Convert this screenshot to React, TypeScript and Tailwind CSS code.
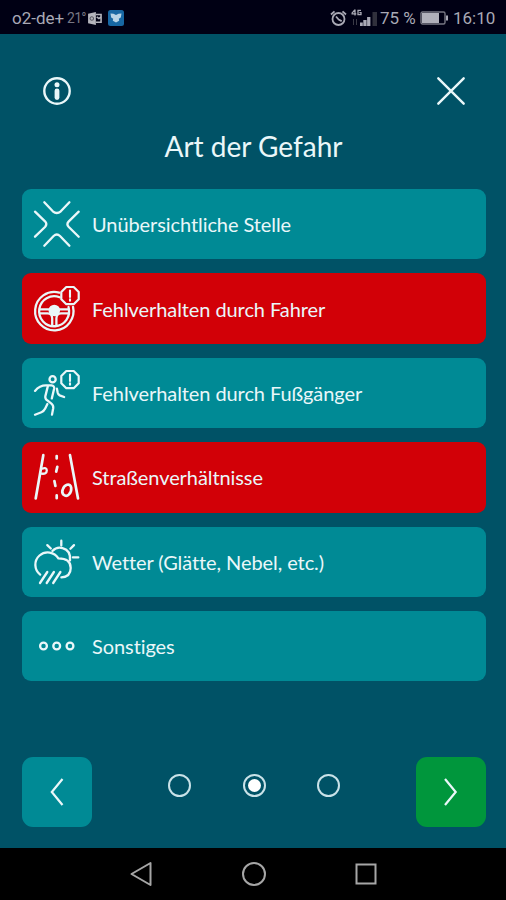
import type { ReactNode } from "react";
import clsx from "clsx";

interface Hazard {
  id: string;
  label: string;
  selected?: boolean;
  icon: ReactNode;
}

// Octagonal warning sign shared by the driver and pedestrian icons
function WarningSign() {
  return (
    <>
      <path d="M33.3 2h7.4l5 5v7.2l-5 5h-7.4l-5-5V7z" strokeWidth="2.2" />
      <path d="M37 5.6v6.4M37 14.2v1.6" strokeWidth="2.1" />
    </>
  );
}

const HAZARDS: Hazard[] = [
  {
    id: "blind-spot",
    label: "Unübersichtliche Stelle",
    icon: (
      <>
        <path d="M11.3 2.3 19.8 11.3Q23.8 14.6 27.8 11.3L36.4 2.3" />
        <path d="M11.3 45.7 20.6 36Q23.8 33 27 36L36.4 45.7" />
        <path d="M2 11.7 12 21.3Q14.6 24.1 12 27L2 36.7" />
        <path d="M45.7 11.7 35.8 21.3Q33 24.1 35.8 27L45.7 36.7" />
      </>
    ),
  },
  {
    id: "driver",
    label: "Fehlverhalten durch Fahrer",
    selected: true,
    icon: (
      <>
        <path d="M26.2 7.6A19.2 19.2 0 1 0 40 21.8" />
        <path d="M26.6 12.3A15 15 0 1 0 35.5 22" />
        <path d="M6.9 24.4h28.8M7.2 28.4h7.4q4.6.4 4.6 5v7M35.4 28.4H28q-4.6.4-4.6 5v7" />
        <circle cx="21.3" cy="25.4" r="4.6" fill="currentColor" />
        <WarningSign />
      </>
    ),
  },
  {
    id: "pedestrian",
    label: "Fehlverhalten durch Fußgänger",
    icon: (
      <>
        <circle cx="19.6" cy="10.2" r="3.1" />
        <path d="M2 21.9Q6.6 16.4 13 16.4h5.4q3.2.2 2.7 3.4L18.8 29.4" />
        <path d="M14.8 17.4 12.3 27.4Q12 30 14.4 31.4L18.4 34.6Q20.6 36.4 20.2 39.2L19 45.6" />
        <path d="M14.4 35 12.2 39.6Q11 42.2 8.4 43.2L2 45.7" />
        <path d="m23.9 19.6.8 4.2q.4 1.8 2 2.6l4.4 1.6" />
        <WarningSign />
      </>
    ),
  },
  {
    id: "road",
    label: "Straßenverhältnisse",
    selected: true,
    icon: (
      <>
        <path d="M10.3 2.2 2.7 45.5M37 2.2l8 43.3" strokeWidth="2.7" />
        <path d="M23.7 3v2.4M24.3 13.8 23.2 18.6M21.4 28l1 5M23.7 42.4v2.8" strokeWidth="2.7" />
        <path d="M9 15.6q4.8-1.6 4.8 2 0 3.8-5.6 3" />
        <path d="M34 31.8q3.6-.8 4.2 3 .4 3.8-2.2 6.6-2.6 2.6-5.4.4-2.2-2.4-.8-5.6 1.4-3.6 4.2-4.4z" strokeWidth="2.7" />
      </>
    ),
  },
  {
    id: "weather",
    label: "Wetter (Glätte, Nebel, etc.)",
    icon: (
      <>
        <path d="M7.2 36.6A12.4 12.4 0 1 1 25.4 20.4Q37.7 20.4 37.7 30 37.7 38.8 28.4 39.4" />
        <path d="M19.4 13Q24 8.2 29.6 10.2 38 12.6 37 22.4" />
        <path d="M28.3 2.7v4.8M14.3 7.1l3.5 3.4M41 7.1l-3.6 3.6M39.9 19.4h5.4" />
        <path d="M14.3 34 7 45M20.9 34 13.7 45M27.4 34 20.2 45" />
      </>
    ),
  },
  {
    id: "other",
    label: "Sonstiges",
    icon: (
      <>
        <circle cx="10.5" cy="24" r="3.4" />
        <circle cx="23.7" cy="24" r="3.4" />
        <circle cx="37" cy="24" r="3.4" />
      </>
    ),
  },
];

const STEPS = 3;
const CURRENT_STEP = 1;

function StatusBar() {
  return (
    <div className="flex h-[34px] shrink-0 items-center justify-between bg-[#000014] pl-[12px] pr-[11px] pt-[2px] font-[Roboto,sans-serif] text-[#a9a9b5]">
      <div className="flex items-center">
        <span className="w-[55px] whitespace-nowrap text-[17px] leading-none">o2-de+</span>
        <span className="w-[20px] whitespace-nowrap text-[14px] leading-none tracking-[-0.7px] text-[#777783]">21°</span>
        <svg width="16" height="13" viewBox="0 0 16 15" fill="none">
          <path d="M0 2 9 0v15l-9-2z" fill="#b5b5bd" />
          <path d="M9 2.8h6v9H9M10 5.5l2.5 2 2.5-2" stroke="#b5b5bd" strokeWidth="1.8" />
          <circle cx="4.3" cy="7.5" r="2" stroke="#55555f" strokeWidth="1.2" />
        </svg>
        <svg className="ml-[5px]" width="16" height="16" viewBox="0 0 16 16">
          <rect width="16" height="16" rx="2.5" fill="#1767a3" />
          <path d="m2.5 3.5 3 .2L8 5l2.5-1.3 3-.2-.7 4-2 1.2.4 2.1L8 12.5l-3.2-1.7.4-2.1-2-1.2z" fill="#b7d3e6" />
        </svg>
      </div>
      <div className="flex items-center">
        <svg width="17" height="17" viewBox="0 0 17 17" fill="none" stroke="currentColor" strokeWidth="1.8">
          <circle cx="8.5" cy="9" r="6" />
          <path d="M1 4.5 4.5 1.3M16 4.5l-3.5-3.2M6 6.5l2.7 3 3 1.6" />
        </svg>
        <svg className="ml-[4px]" width="27" height="18" viewBox="0 0 27 18" fill="currentColor">
          <path d="M4 .5v6M.5 4.8h4.8M.6 4.6 3.8.8M10 1.4H7v4.2h3V3.6H8.4" fill="none" stroke="currentColor" strokeWidth="1.3" />
          <path d="M2.5 10v6M5.5 10v6" stroke="#3a3a46" />
          <path d="M9 13.5h2.8V17H9zM12.3 11h3.3v6h-3.3zM16.1 8h3.3v9h-3.3z" />
          <path d="M21.5 3H26v14h-4.5z" fill="#30303c" />
        </svg>
        <span className="ml-[2px] w-[40px] whitespace-nowrap text-[17px] leading-none">75 %</span>
        <svg width="28" height="14" viewBox="0 0 28 14" fill="none">
          <rect x="1" y="1" width="24" height="12" rx="1.5" stroke="#777783" strokeWidth="1.4" />
          <path d="M2 2h17v10H2z" fill="#b0b0ba" />
          <path d="M26 4.5h2v5h-2z" fill="#a9a9b5" />
        </svg>
        <span className="ml-[5px] w-[42px] whitespace-nowrap text-[17px] leading-none">16:10</span>
      </div>
    </div>
  );
}

function HazardButton({ hazard }: { hazard: Hazard }) {
  return (
    <button
      type="button"
      className={clsx(
        "flex h-[70.4px] w-full items-center rounded-[9px] pl-[11px] text-left",
        hazard.selected ? "bg-[#d20007]" : "bg-[#008a95]",
      )}
    >
      <svg
        className="shrink-0"
        width="48"
        height="48"
        viewBox="0 0 48 48"
        fill="none"
        stroke="currentColor"
        strokeWidth="2.3"
        strokeLinecap="round"
        strokeLinejoin="round"
      >
        {hazard.icon}
      </svg>
      <span className="ml-[11px] whitespace-nowrap text-[20px] leading-none tracking-[-0.08px]">{hazard.label}</span>
    </button>
  );
}

function StepDots() {
  return (
    <div className="flex h-[57px] items-center gap-[51.5px]">
      {Array.from({ length: STEPS }, (_, i) => (
        <span
          key={i}
          className="flex h-[23px] w-[23px] items-center justify-center rounded-full border-2 border-[#c9e2e8]"
        >
          {i === CURRENT_STEP && <span className="h-[13px] w-[13px] rounded-full bg-white" />}
        </span>
      ))}
    </div>
  );
}

function SystemNav() {
  return (
    <div className="flex h-[52px] shrink-0 items-center justify-center gap-[86.5px] bg-black pl-[1px] text-[#a6a6a6]">
      <svg width="26" height="26" viewBox="0 0 26 26" fill="none" stroke="currentColor" strokeWidth="2" strokeLinejoin="round">
        <path d="M22.5 2v22L3.5 13z" />
      </svg>
      <svg width="26" height="26" viewBox="0 0 26 26" fill="none" stroke="currentColor" strokeWidth="2">
        <circle cx="13" cy="13" r="11" />
      </svg>
      <svg width="26" height="26" viewBox="0 0 26 26" fill="none" stroke="currentColor" strokeWidth="2">
        <path d="M3.5 3.5h19v19h-19z" />
      </svg>
    </div>
  );
}

export default function App() {
  return (
    <div className="flex h-[900px] w-[506px] flex-col overflow-hidden bg-[#005266] font-[Lato,sans-serif] text-[#eaf7f9]">
      <StatusBar />

      <main className="flex flex-1 flex-col pl-[22px] pr-[20px]">
        <header className="flex items-center justify-between pl-[20px] pr-[20px] pt-[42px]">
          <button type="button" aria-label="Info">
            <svg width="30" height="30" viewBox="0 0 30 30" fill="none" stroke="currentColor" strokeWidth="2.4">
              <circle cx="15" cy="15" r="12.7" />
              <circle cx="15" cy="8.7" r="2.5" fill="currentColor" stroke="none" />
              <path d="M15 14.8v6.8" strokeWidth="4.8" strokeLinecap="round" />
            </svg>
          </button>
          <button type="button" aria-label="Schließen">
            <svg width="30" height="30" viewBox="0 0 30 30" fill="none" stroke="currentColor" strokeWidth="2.4" strokeLinecap="round">
              <path d="m2.3 2.3 25.4 25.4M27.7 2.3 2.3 27.7" />
            </svg>
          </button>
        </header>

        <h1 className="mt-[22px] h-[61px] pr-[1px] text-center text-[28px] leading-[36px]">Art der Gefahr</h1>

        <div className="flex flex-col gap-[14px]">
          {HAZARDS.map((hazard) => (
            <HazardButton key={hazard.id} hazard={hazard} />
          ))}
        </div>

        <footer className="mt-auto mb-[21px] flex items-start justify-between">
          <button type="button" aria-label="Zurück" className="flex h-[70px] w-[70px] items-center justify-center rounded-[11px] bg-[#008a95]">
            <svg width="14" height="28" viewBox="0 0 14 28" fill="none" stroke="currentColor" strokeWidth="2.2">
              <path d="M12.5 1 1.8 14l10.7 13" />
            </svg>
          </button>
          <StepDots />
          <button type="button" aria-label="Weiter" className="flex h-[70px] w-[70px] items-center justify-center rounded-[11px] bg-[#00963c]">
            <svg width="14" height="28" viewBox="0 0 14 28" fill="none" stroke="currentColor" strokeWidth="2.2">
              <path d="m1 1 10.7 13L1 27" />
            </svg>
          </button>
        </footer>
      </main>

      <SystemNav />
    </div>
  );
}
